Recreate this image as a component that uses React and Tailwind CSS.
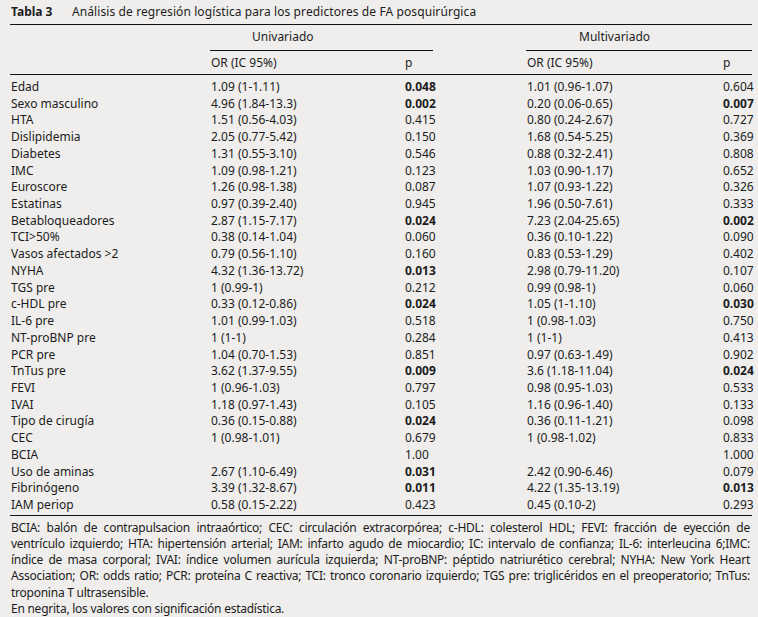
import React from 'react';

const rows = [
  ['Edad', '1.09 (1-1.11)', '0.048', true, '1.01 (0.96-1.07)', '0.604', false],
  ['Sexo masculino', '4.96 (1.84-13.3)', '0.002', true, '0.20 (0.06-0.65)', '0.007', true],
  ['HTA', '1.51 (0.56-4.03)', '0.415', false, '0.80 (0.24-2.67)', '0.727', false],
  ['Dislipidemia', '2.05 (0.77-5.42)', '0.150', false, '1.68 (0.54-5.25)', '0.369', false],
  ['Diabetes', '1.31 (0.55-3.10)', '0.546', false, '0.88 (0.32-2.41)', '0.808', false],
  ['IMC', '1.09 (0.98-1.21)', '0.123', false, '1.03 (0.90-1.17)', '0.652', false],
  ['Euroscore', '1.26 (0.98-1.38)', '0.087', false, '1.07 (0.93-1.22)', '0.326', false],
  ['Estatinas', '0.97 (0.39-2.40)', '0.945', false, '1.96 (0.50-7.61)', '0.333', false],
  ['Betabloqueadores', '2.87 (1.15-7.17)', '0.024', true, '7.23 (2.04-25.65)', '0.002', true],
  ['TCI>50%', '0.38 (0.14-1.04)', '0.060', false, '0.36 (0.10-1.22)', '0.090', false],
  ['Vasos afectados >2', '0.79 (0.56-1.10)', '0.160', false, '0.83 (0.53-1.29)', '0.402', false],
  ['NYHA', '4.32 (1.36-13.72)', '0.013', true, '2.98 (0.79-11.20)', '0.107', false],
  ['TGS pre', '1 (0.99-1)', '0.212', false, '0.99 (0.98-1)', '0.060', false],
  ['c-HDL pre', '0.33 (0.12-0.86)', '0.024', true, '1.05 (1-1.10)', '0.030', true],
  ['IL-6 pre', '1.01 (0.99-1.03)', '0.518', false, '1 (0.98-1.03)', '0.750', false],
  ['NT-proBNP pre', '1 (1-1)', '0.284', false, '1 (1-1)', '0.413', false],
  ['PCR pre', '1.04 (0.70-1.53)', '0.851', false, '0.97 (0.63-1.49)', '0.902', false],
  ['TnTus pre', '3.62 (1.37-9.55)', '0.009', true, '3.6 (1.18-11.04)', '0.024', true],
  ['FEVI', '1 (0.96-1.03)', '0.797', false, '0.98 (0.95-1.03)', '0.533', false],
  ['IVAI', '1.18 (0.97-1.43)', '0.105', false, '1.16 (0.96-1.40)', '0.133', false],
  ['Tipo de cirugía', '0.36 (0.15-0.88)', '0.024', true, '0.36 (0.11-1.21)', '0.098', false],
  ['CEC', '1 (0.98-1.01)', '0.679', false, '1 (0.98-1.02)', '0.833', false],
  ['BCIA', '', '1.00', false, '', '1.000', false],
  ['Uso de aminas', '2.67 (1.10-6.49)', '0.031', true, '2.42 (0.90-6.46)', '0.079', false],
  ['Fibrinógeno', '3.39 (1.32-8.67)', '0.011', true, '4.22 (1.35-13.19)', '0.013', true],
  ['IAM periop', '0.58 (0.15-2.22)', '0.423', false, '0.45 (0.10-2)', '0.293', false],
];

const notes = [
  'BCIA: balón de contrapulsacion intraaórtico; CEC: circulación extracorpórea; c-HDL: colesterol HDL; FEVI: fracción de eyección de',
  'ventrículo izquierdo; HTA: hipertensión arterial; IAM: infarto agudo de miocardio; IC: intervalo de confianza; IL-6: interleucina 6;IMC:',
  'índice de masa corporal; IVAI: índice volumen aurícula izquierda; NT-proBNP: péptido natriurético cerebral; NYHA: New York Heart',
  'Association; OR: odds ratio; PCR: proteína C reactiva; TCI: tronco coronario izquierdo; TGS pre: triglicéridos en el preoperatorio; TnTus:',
];

const cols = 'grid grid-cols-[200px_194px_122px_196px_1fr]';

export default function App() {
  return (
    <div className="w-[758px] h-[617px] bg-[#efeeec] text-[#1c1c1c] text-[12px] font-['Noto_Sans',sans-serif] overflow-hidden">
      <div className="ml-[10px] w-[742px]">
        {/* caption */}
        <div className="h-[25px] pl-px pt-[3px] leading-[17px] border-b border-[#111]">
          <span className="font-bold inline-block w-[61px]">Tabla 3</span>
          <span className="tracking-[0.1px]">Análisis de regresión logística para los predictores de FA posquirúrgica</span>
        </div>

        {/* header */}
        <div className={`${cols} border-b border-[#111]`}>
          <div />
          <div className="col-span-2 w-[223px] border-b border-[#111] h-[26px] pt-[3px] leading-[17px] pl-[42px]">Univariado</div>
          <div className="col-span-2 border-b border-[#111] h-[26px] pt-[3px] leading-[17px] pl-[53px]">Multivariado</div>
          <div className="h-[23px]" />
          <div className="h-[23px] pl-px pt-[3px] leading-[17px]">OR (IC 95%)</div>
          <div className="h-[23px] pl-px pt-[3px] leading-[17px]">p</div>
          <div className="h-[23px] pl-px pt-[3px] leading-[17px]">OR (IC 95%)</div>
          <div className="h-[23px] pl-px pt-[3px] leading-[17px]">p</div>
        </div>

        {/* body */}
        <div className="pt-[4px] pb-[1px] border-b border-[#111]">
          {rows.map((r, i) => (
            <div key={i} className={`${cols} h-[16.72px] leading-[16.72px]`}>
              <div className="pl-px">{r[0]}</div>
              <div className="pl-px">{r[1]}</div>
              <div className={`pl-px ${r[3] ? 'font-bold' : ''}`}>{r[2]}</div>
              <div className="pl-px">{r[4]}</div>
              <div className={`pl-px ${r[6] ? 'font-bold' : ''}`}>{r[5]}</div>
            </div>
          ))}
        </div>

        {/* footnote */}
        <div className="pt-[4px] pl-px pr-[2px] leading-[16.2px] tracking-[-0.25px]">
          {notes.map((n, i) => (
            <div key={i} className="text-justify [text-align-last:justify] whitespace-nowrap">{n}</div>
          ))}
          <div>troponina T ultrasensible.</div>
          <div>En negrita, los valores con significación estadística.</div>
        </div>
      </div>
    </div>
  );
}
